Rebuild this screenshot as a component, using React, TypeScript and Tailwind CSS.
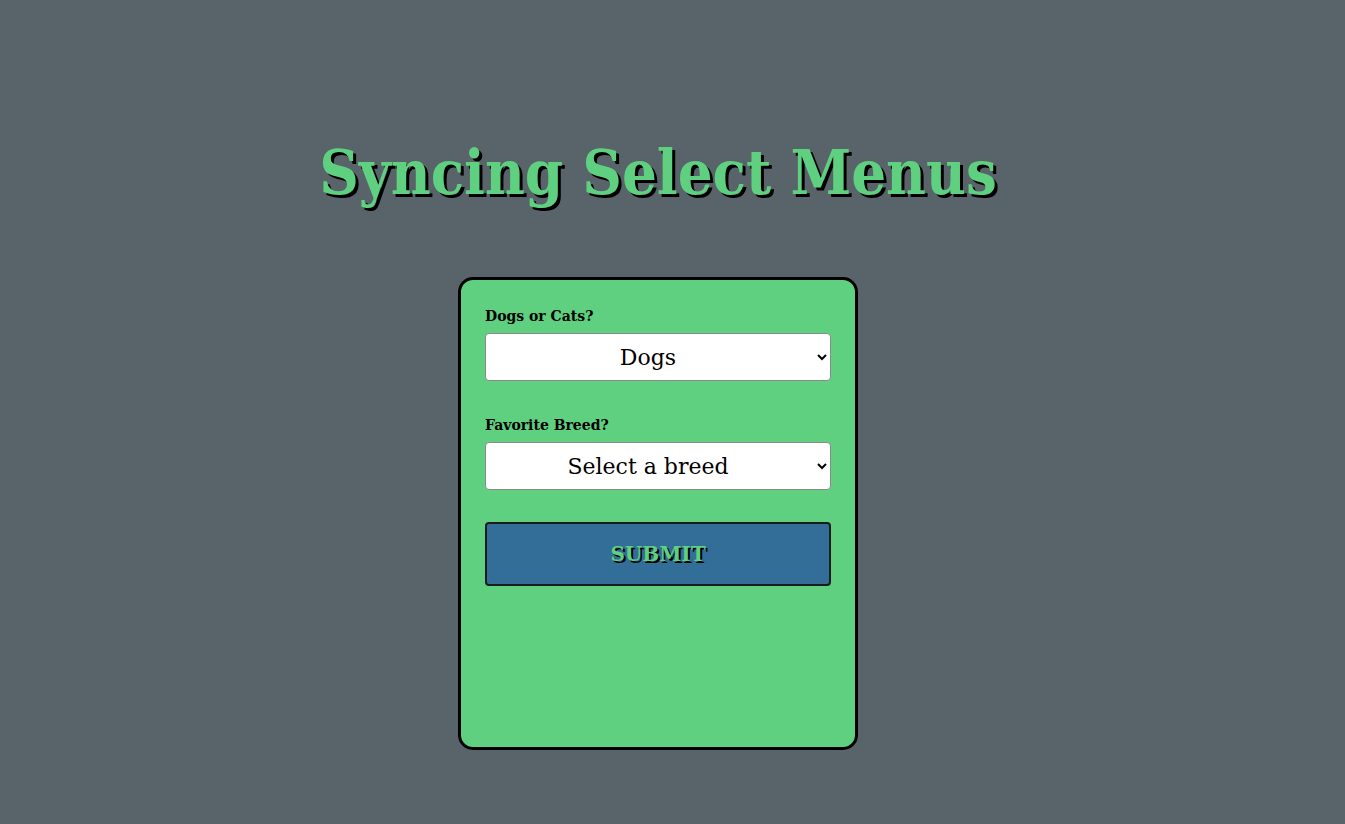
import * as React from 'react';

const slab = "font-['Roboto_Slab','DejaVu_Serif',serif]";

const App: React.FC = () => {
  const [pet, setPet] = React.useState<string>('dogs');
  const [breed, setBreed] = React.useState<string>('');

  const breeds: Record<string, string[]> = {
    dogs: ['Labrador', 'Beagle', 'Poodle'],
    cats: ['Siamese', 'Persian', 'Maine Coon'],
  };

  return (
    <div className={`min-h-screen bg-[#59636a] flex flex-col items-center pr-[29px] ${slab}`}>
      {/* Title */}
      <h1 className="mt-[133px] text-[61px] leading-[80px] font-bold text-[#5fcf80] [text-shadow:3px_3px_0_#000] [font-stretch:condensed]">
        Syncing Select Menus
      </h1>

      {/* Card */}
      <form
        onSubmit={(e) => e.preventDefault()}
        className="mt-[64px] w-[400px] h-[473px] bg-[#5fcf80] border-[3px] border-black rounded-[15px] px-6 pt-[26px] flex flex-col"
      >
        <label className="text-[14px] leading-5 font-bold text-black">Dogs or Cats?</label>
        <select
          value={pet}
          onChange={(e) => {
            setPet(e.target.value);
            setBreed('');
          }}
          className="mt-[7px] h-12 w-full bg-white border border-[#8a8a8a] rounded-[4px] text-[22px] text-black text-center [text-align-last:center] pr-2"
        >
          <option value="dogs">Dogs</option>
          <option value="cats">Cats</option>
        </select>

        <label className="mt-[34px] text-[14px] leading-5 font-bold text-black">Favorite Breed?</label>
        <select
          value={breed}
          onChange={(e) => setBreed(e.target.value)}
          className="mt-[7px] h-12 w-full bg-white border border-[#8a8a8a] rounded-[4px] text-[22px] text-black text-center [text-align-last:center] pr-2"
        >
          <option value="">Select a breed</option>
          {breeds[pet].map((b) => (
            <option key={b} value={b}>
              {b}
            </option>
          ))}
        </select>

        <button
          type="submit"
          className="mt-8 h-16 w-full bg-[#336e99] border-2 border-[#1c1c1c] rounded-[4px] text-[20px] font-bold text-[#5fcf80] [text-shadow:2px_2px_0_#000]"
        >
          SUBMIT
        </button>
      </form>
    </div>
  );
};

export default App;
